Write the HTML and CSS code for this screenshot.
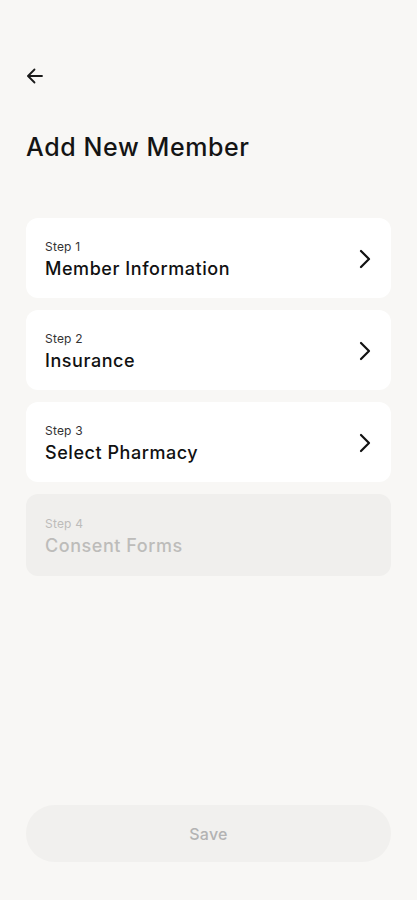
FILE: index.html
```html
<!DOCTYPE html>
<html lang="en">
<head>
    <meta charset="UTF-8">
    <meta name="viewport" content="width=device-width, initial-scale=1.0">
    <title>Add New Member</title>
    <link rel="stylesheet" href="styles.css">
</head>
<body>

    <div class="screen">
        <button class="back-btn" aria-label="Back">
            <svg width="20" height="20" viewBox="0 0 20 20" fill="none" stroke="#1a1a1a" stroke-width="1.8" stroke-linecap="round" stroke-linejoin="round">
                <path d="M17 10H3.5"/>
                <path d="M9.5 3.5L3 10l6.5 6.5"/>
            </svg>
        </button>

        <h1 class="page-title">Add New Member</h1>

        <div class="steps">
            <div class="step-card">
                <div class="step-text">
                    <span class="step-label">Step 1</span>
                    <span class="step-name">Member Information</span>
                </div>
                <svg class="chevron" width="16" height="20" viewBox="0 0 16 20" fill="none" stroke="#111" stroke-width="2.2" stroke-linecap="round" stroke-linejoin="round">
                    <path d="M4 2l8 8-8 8"/>
                </svg>
            </div>
            <div class="step-card">
                <div class="step-text">
                    <span class="step-label">Step 2</span>
                    <span class="step-name">Insurance</span>
                </div>
                <svg class="chevron" width="16" height="20" viewBox="0 0 16 20" fill="none" stroke="#111" stroke-width="2.2" stroke-linecap="round" stroke-linejoin="round">
                    <path d="M4 2l8 8-8 8"/>
                </svg>
            </div>
            <div class="step-card">
                <div class="step-text">
                    <span class="step-label">Step 3</span>
                    <span class="step-name">Select Pharmacy</span>
                </div>
                <svg class="chevron" width="16" height="20" viewBox="0 0 16 20" fill="none" stroke="#111" stroke-width="2.2" stroke-linecap="round" stroke-linejoin="round">
                    <path d="M4 2l8 8-8 8"/>
                </svg>
            </div>
            <div class="step-card disabled">
                <div class="step-text">
                    <span class="step-label">Step 4</span>
                    <span class="step-name">Consent Forms</span>
                </div>
            </div>
        </div>

        <button class="save-btn" disabled>Save</button>
    </div>

</body>
</html>
```

FILE: styles.css
```css
/* General Styles */
body {
    margin: 0;
    padding: 0;
    background-color: #f8f7f5;
    font-family: "Inter", "Noto Sans", sans-serif;
    color: #141414;
}

.screen {
    display: flex;
    flex-direction: column;
    min-height: 100vh;
    box-sizing: border-box;
    padding: 64px 26px 38px 26px;
}

.back-btn {
    width: 24px;
    height: 24px;
    padding: 0;
    margin-left: -3px;
    border: none;
    background: none;
    display: flex;
    align-items: center;
    justify-content: center;
    cursor: pointer;
}

.page-title {
    margin: 43px 0 0 0;
    font-size: 25px;
    font-weight: 500;
    letter-spacing: 0.6px;
    line-height: 32px;
}

.steps {
    display: flex;
    flex-direction: column;
    gap: 12px;
    margin-top: 55px;
}

.step-card {
    display: flex;
    align-items: center;
    justify-content: space-between;
    height: 80px;
    box-sizing: border-box;
    padding: 0 18px 0 19px;
    background: #ffffff;
    border-radius: 12px;
}

.step-text {
    display: flex;
    flex-direction: column;
    gap: 4px;
    padding-top: 2px;
}

.step-label {
    font-size: 12px;
    font-weight: 400;
    color: #333333;
    letter-spacing: 0.2px;
}

.step-name {
    font-size: 18px;
    font-weight: 500;
    color: #111111;
    letter-spacing: 0.55px;
}

.chevron {
    margin-top: 2px;
}

.step-card.disabled {
    background: #f0efed;
    height: 82px;
}

.step-card.disabled .step-label,
.step-card.disabled .step-name {
    color: #bdbcba;
}

.save-btn {
    margin-top: auto;
    height: 57px;
    width: 100%;
    border: none;
    border-radius: 29px;
    background: #f1f0ee;
    color: #b3b3b3;
    font-family: inherit;
    font-size: 16px;
    font-weight: 500;
    letter-spacing: 0.3px;
}
```
